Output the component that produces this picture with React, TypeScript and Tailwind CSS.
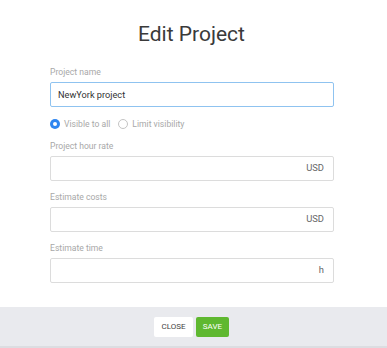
export default function App() {
  const fields = [
    { label: "Project hour rate", unit: "USD" },
    { label: "Estimate costs", unit: "USD" },
    { label: "Estimate time", unit: "h" },
  ];

  return (
    <div className="w-[387px] h-[348px] bg-white flex flex-col font-['Roboto',sans-serif]">
      <h1 className="text-center text-[21px] leading-[25px] text-[#3a3a3a] pt-[22px] pr-[4px]">Edit Project</h1>

      <div className="ml-[50px] pt-[19px] flex flex-col w-[284px]">
        <label className="text-[8.6px] leading-[12px] text-[#a8a8a8]">Project name</label>
        <div className="mt-[4px] h-[25px] border border-[#8fc3f0] rounded-[2px] flex items-center px-[7px] text-[9.2px] text-[#333]">
          NewYork project
        </div>

        <div className="flex items-center mt-[11px] h-[12px] text-[8.6px] text-[#a8a8a8]">
          <span className="w-[10px] h-[10px] rounded-full bg-[#2f86f0] flex items-center justify-center">
            <span className="w-[4px] h-[4px] rounded-full bg-white" />
          </span>
          <span className="ml-[4px]">Visible to all</span>
          <span className="ml-[8px] w-[10px] h-[10px] rounded-full border border-[#c4c4c4]" />
          <span className="ml-[4px]">Limit visibility</span>
        </div>

        {fields.map((f) => (
          <div key={f.label} className="flex flex-col mt-[10px]">
            <label className="text-[8.6px] leading-[12px] text-[#a8a8a8]">{f.label}</label>
            <div className="mt-[4px] h-[25px] border border-[#dcdcdc] rounded-[2px] flex items-center justify-end px-[9px] text-[9.4px] text-[#666]">
              {f.unit}
            </div>
          </div>
        ))}
      </div>

      <div className="mt-auto h-[39px] bg-[#e9eaee] flex items-center justify-center gap-[3px] pr-[4px]">
        <button className="w-[39px] h-[20px] bg-white rounded-[2px] text-[8px] text-[#444]">CLOSE</button>
        <button className="w-[33px] h-[20px] bg-[#5fb830] rounded-[2px] text-[8px] text-white">SAVE</button>
      </div>
      <div className="h-[2px] bg-[#dcdde1]" />
    </div>
  );
}
